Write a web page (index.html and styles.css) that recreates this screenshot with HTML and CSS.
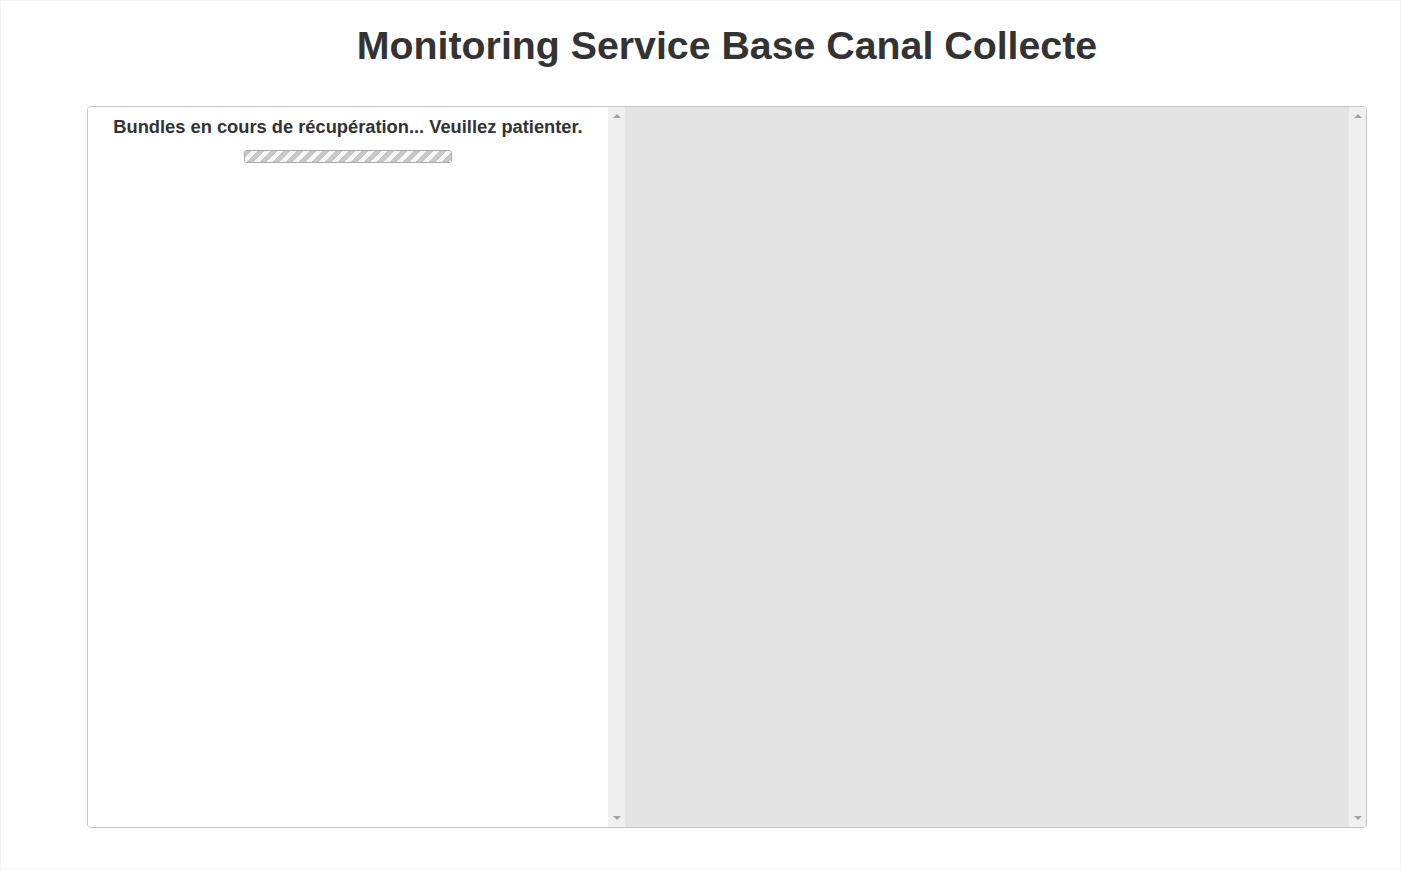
FILE: index.html
```html
<!DOCTYPE html>
<html lang="fr">
<head>
<meta charset="utf-8">
<title>Monitoring Service Base Canal Collecte</title>
<link rel="stylesheet" href="styles.css">
</head>
<body>
<div class="page">
  <h1 class="title">Monitoring Service Base Canal Collecte</h1>
  <div class="panels">
    <div class="pane pane-left">
      <div class="pane-content">
        <p class="loading-text">Bundles en cours de récupération... Veuillez patienter.</p>
        <div class="progress"><div class="progress-bar"></div></div>
      </div>
      <div class="scrollbar">
        <span class="arrow arrow-up"></span>
        <span class="arrow arrow-down"></span>
      </div>
    </div>
    <div class="pane pane-right">
      <div class="pane-content pane-content-grey"></div>
      <div class="scrollbar">
        <span class="arrow arrow-up"></span>
        <span class="arrow arrow-down"></span>
      </div>
    </div>
  </div>
</div>
</body>
</html>
```
FILE: styles.css
```css
html, body {
  margin: 0;
  padding: 0;
  background: #ffffff;
}
body {
  font-family: "Liberation Sans", Arial, sans-serif;
  color: #333333;
}
.page {
  height: 870px;
  box-sizing: border-box;
  border: 1px solid #f3f3f3;
  padding: 0 33px 0 86px;
}
.title {
  margin: 0;
  padding-top: 22px;
  height: 105px;
  box-sizing: border-box;
  text-align: center;
  font-size: 39.3px;
  font-weight: bold;
  line-height: 45px;
  color: #333333;
}
.panels {
  display: flex;
  width: 1280px;
  height: 722px;
  box-sizing: border-box;
  border: 1px solid #c4c4c4;
  border-radius: 4px;
  overflow: hidden;
}
.pane {
  display: flex;
  height: 100%;
}
.pane-left {
  width: 537px;
}
.pane-right {
  flex: 1;
}
.pane-content {
  flex: 1;
  display: flex;
  flex-direction: column;
  align-items: center;
  background: #ffffff;
}
.pane-content-grey {
  background: #e5e5e5;
}
.loading-text {
  margin: 10px 0 0;
  font-size: 18.3px;
  font-weight: bold;
  line-height: 20px;
  color: #333333;
}
.progress {
  margin-top: 13px;
  width: 206px;
  height: 11px;
  border: 1px solid #a9a9a9;
  border-radius: 3px;
  overflow: hidden;
  background: #e8e8e8;
}
.progress-bar {
  width: 100%;
  height: 100%;
  background-color: #c8c8c8;
  background-image: linear-gradient(-45deg, rgba(255,255,255,0.85) 25%, transparent 25%, transparent 50%, rgba(255,255,255,0.85) 50%, rgba(255,255,255,0.85) 75%, transparent 75%, transparent);
  background-size: 13px 13px;
}
.scrollbar {
  width: 17px;
  background: #f0f0f0;
  display: flex;
  flex-direction: column;
  justify-content: space-between;
  align-items: center;
  padding: 7px 0 7px;
  box-sizing: border-box;
}
.arrow {
  width: 0;
  height: 0;
  border-left: 4px solid transparent;
  border-right: 4px solid transparent;
}
.arrow-up {
  border-bottom: 4px solid #a3a3a3;
}
.arrow-down {
  border-top: 4px solid #a3a3a3;
}
```
